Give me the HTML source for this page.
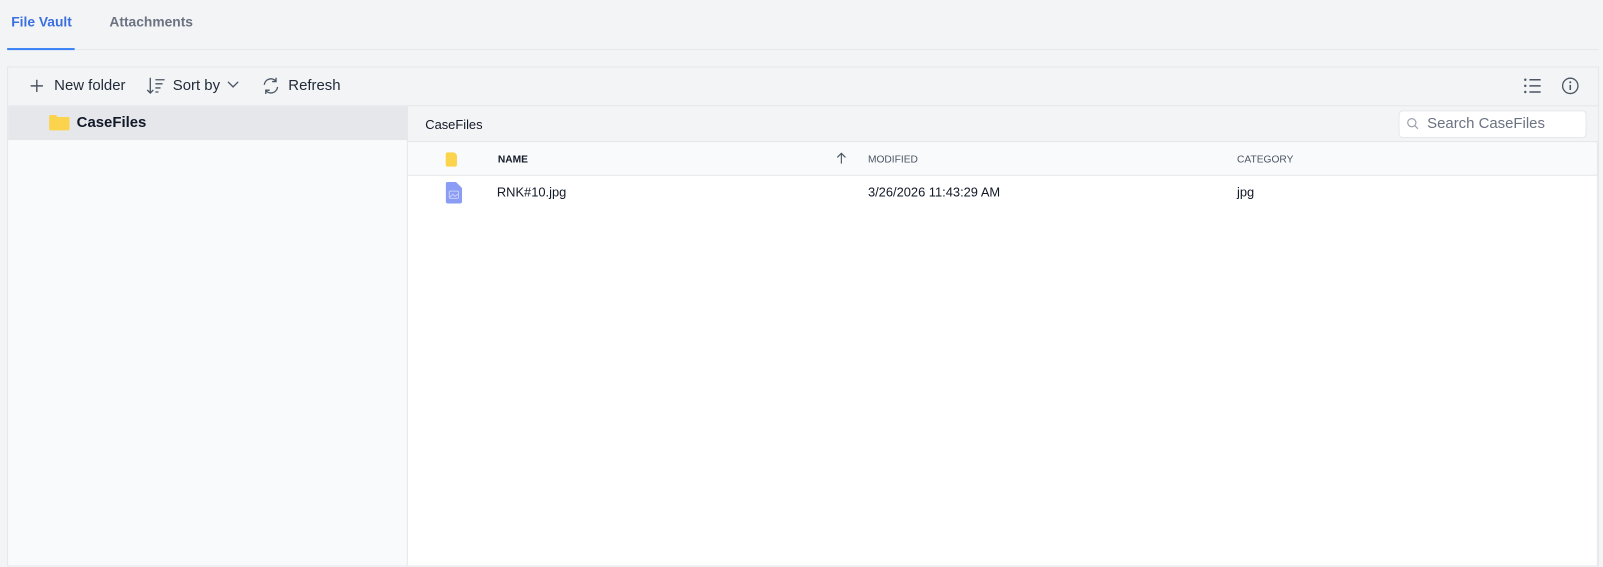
<!DOCTYPE html>
<html><head><style>
*{box-sizing:border-box;margin:0;padding:0}
body{width:1603px;height:567px;background:#f3f4f6;font-family:"Liberation Sans",sans-serif;overflow:hidden;color:#111827}
#w{position:relative;width:1568px;height:555px;transform:scale(1.02232);transform-origin:0 0}
.a{position:absolute}
</style></head><body><div id="w">
<div class="a" style="left:11px;top:14px;font-size:13.5px;font-weight:bold;color:#3b6fe0">File Vault</div>
<div class="a" style="left:107px;top:14px;font-size:13.5px;font-weight:bold;color:#6b7280">Attachments</div>
<div class="a" style="left:7px;top:48px;width:1557px;height:1px;background:#e5e7eb"></div>
<div class="a" style="left:7px;top:47px;width:66px;height:2px;background:#3b82f6"></div>

<div class="a" style="left:7px;top:65px;width:1557px;height:489px;border:1px solid #e5e7eb;background:#f3f4f6"></div>
<svg class="a" style="left:29px;top:77px" width="14" height="14" viewBox="0 0 14 14"><path d="M7 1v12M1 7h12" stroke="#4b5563" stroke-width="1.4"/></svg>
<div class="a" style="left:53px;top:76px;font-size:14.6px;color:#1f2937">New folder</div>
<svg class="a" style="left:143px;top:75px" width="20" height="18" viewBox="0 0 20 18"><path d="M4 1v15M1 13l3 3 3-3M9 3h9M9 7h7M9 11h5M9 15h3" stroke="#4b5563" stroke-width="1.3" fill="none"/></svg>
<div class="a" style="left:169px;top:76px;font-size:14.6px;color:#1f2937">Sort by</div>
<svg class="a" style="left:222px;top:79px" width="12" height="8" viewBox="0 0 12 8"><path d="M1 1l5 5 5-5" stroke="#4b5563" stroke-width="1.3" fill="none"/></svg>
<svg class="a" style="left:256px;top:75px" width="18" height="18" viewBox="0 0 18 18"><path d="M2.5 8A6.5 6.5 0 0 1 14 4.5M15.5 10A6.5 6.5 0 0 1 4 13.5M14 1v3.8h-3.8M4 17v-3.8h3.8" stroke="#4b5563" stroke-width="1.3" fill="none"/></svg>
<div class="a" style="left:282px;top:76px;font-size:14.6px;color:#1f2937">Refresh</div>
<svg class="a" style="left:1490px;top:76px" width="18" height="16" viewBox="0 0 18 16"><circle cx="2" cy="2" r="1.2" fill="#4b5563"/><circle cx="2" cy="8" r="1.2" fill="#4b5563"/><circle cx="2" cy="14" r="1.2" fill="#4b5563"/><path d="M6 2h11M6 8h11M6 14h11" stroke="#4b5563" stroke-width="1.4"/></svg>
<svg class="a" style="left:1527px;top:75px" width="18" height="18" viewBox="0 0 18 18"><circle cx="9" cy="9" r="7.5" stroke="#4b5563" stroke-width="1.3" fill="none"/><path d="M9 8v5" stroke="#4b5563" stroke-width="1.5"/><circle cx="9" cy="5.5" r="1" fill="#4b5563"/></svg>
<div class="a" style="left:8px;top:103px;width:1555px;height:1px;background:#e5e7eb"></div>
<div class="a" style="left:8px;top:104px;width:390px;height:449px;background:#f9fafb"></div>
<div class="a" style="left:8px;top:104px;width:390px;height:33px;background:#e5e7eb"></div>
<svg class="a" style="left:48px;top:112px" width="20" height="16" viewBox="0 0 20 16"><path d="M0 2a1.5 1.5 0 0 1 1.5-1.5h5l2 2h10a1.5 1.5 0 0 1 1.5 1.5v10a1.5 1.5 0 0 1-1.5 1.5h-17A1.5 1.5 0 0 1 0 14z" fill="#fcd34d"/></svg>
<div class="a" style="left:75px;top:112px;font-size:14.6px;font-weight:bold;color:#111827">CaseFiles</div>
<div class="a" style="left:398px;top:104px;width:1px;height:449px;background:#e5e7eb"></div>
<div class="a" style="left:416px;top:115px;font-size:12.6px;color:#111827">CaseFiles</div>
<div class="a" style="left:1368px;top:108px;width:184px;height:27px;background:#fff;border:1px solid #e5e7eb;border-radius:4px"></div>
<svg class="a" style="left:1376px;top:115px" width="12" height="12" viewBox="0 0 12 12"><circle cx="5" cy="5" r="4" stroke="#9ca3af" stroke-width="1.2" fill="none"/><path d="M8 8l3 3" stroke="#9ca3af" stroke-width="1.2"/></svg>
<div class="a" style="left:1396px;top:113px;font-size:14.6px;color:#6b7280">Search CaseFiles</div>
<div class="a" style="left:399px;top:138px;width:1164px;height:34px;background:#f9fafb;border-top:1px solid #e5e7eb;border-bottom:1px solid #e5e7eb;border-right:1px solid #e5e7eb"></div>
<div class="a" style="left:436px;top:149px;width:11px;height:14px;background:#fcd34d;border-radius:2px 4px 2px 2px"></div>
<div class="a" style="left:487px;top:151px;font-size:10px;font-weight:bold;color:#111827">NAME</div>
<svg class="a" style="left:817px;top:149px" width="12" height="12" viewBox="0 0 12 12"><path d="M6 11V1M2 5l4-4 4 4" stroke="#4b5563" stroke-width="1.1" fill="none"/></svg>
<div class="a" style="left:849px;top:151px;font-size:10px;color:#4b5563">MODIFIED</div>
<div class="a" style="left:1210px;top:151px;font-size:10px;color:#4b5563">CATEGORY</div>
<div class="a" style="left:399px;top:172px;width:1164px;height:381px;background:#fff;border-right:1px solid #e5e7eb"></div>
<svg class="a" style="left:436px;top:178px" width="16" height="21" viewBox="0 0 16 21"><path d="M2 0h8l6 6v13a2 2 0 0 1-2 2H2a2 2 0 0 1-2-2V2a2 2 0 0 1 2-2z" fill="#8b9cf4"/><rect x="3.5" y="9" width="9" height="7" rx="1" stroke="#c7d0fb" fill="none"/><path d="M4 15l3-3 2 2 3-2" stroke="#c7d0fb" fill="none"/></svg>
<div class="a" style="left:486px;top:181px;font-size:12.6px;color:#111827">RNK#10.jpg</div>
<div class="a" style="left:849px;top:181px;font-size:12.6px;color:#111827">3/26/2026 11:43:29 AM</div>
<div class="a" style="left:1210px;top:181px;font-size:12.6px;color:#111827">jpg</div>
</div></body></html>
